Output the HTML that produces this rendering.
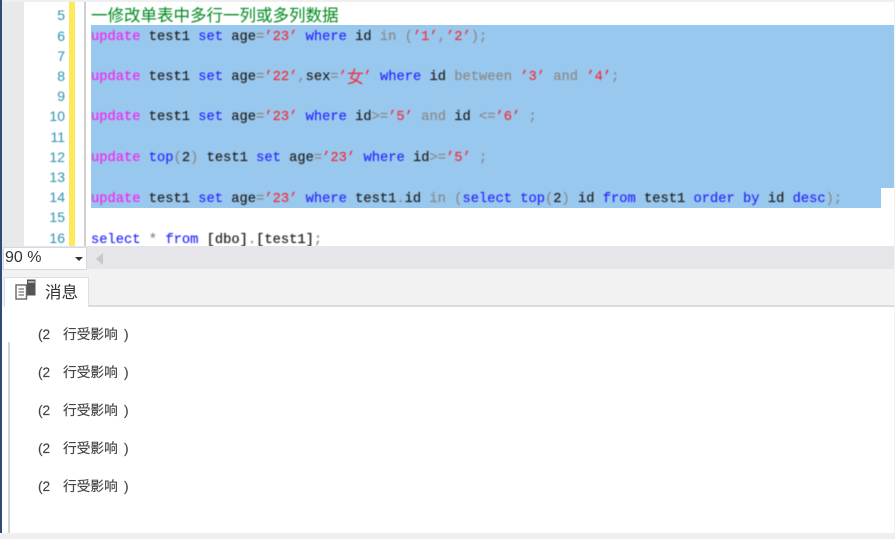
<!DOCTYPE html>
<html><head><meta charset="utf-8"><style>
html,body{margin:0;padding:0;background:#fff}
body{width:895px;height:539px;position:relative;overflow:hidden}
.a{position:absolute}
.l{position:absolute;left:91px;height:20px;line-height:20px;white-space:pre;font-family:"Liberation Mono",monospace;font-size:13.75px;color:#222;font-weight:400;-webkit-text-stroke:.2px;filter:blur(.45px)}
.l i{font-style:normal}
.m{color:#f526f5}.b{color:#2a2aff}.g{color:#8a8a8a}.r{color:#f0303f}
.z{font-family:"Noto Sans CJK SC",sans-serif;font-size:17px;display:inline-block;width:16.5px;height:20px;line-height:20px;overflow:visible;vertical-align:top;text-align:center;-webkit-text-stroke:0;position:relative;top:-2px}
.n{position:absolute;left:30px;width:35px;text-align:right;height:20px;line-height:20px;font-family:"Liberation Sans",sans-serif;font-size:14px;color:#2b91af;filter:blur(.4px)}
.o{position:absolute;height:18px;line-height:18px;white-space:pre;font-family:"Liberation Sans","Noto Sans CJK SC",sans-serif;font-size:13.7px;color:#444;-webkit-text-stroke:.15px;filter:blur(.35px)}
</style></head><body>
<div class="a" style="left:0;top:0;width:895px;height:2px;background:#efefef"></div>
<div class="a" style="left:2px;top:2px;width:22px;height:244px;background:#e9e9ea"></div>
<div class="a" style="left:69px;top:2px;width:6px;height:244px;background:#fde95a"></div>
<div class="a" style="left:84px;top:2px;width:2px;height:244px;background:#cfcfcf"></div>
<div class="a" style="left:91px;top:25px;width:804px;height:163px;background:#99c8ee"></div>
<div class="a" style="left:91px;top:188px;width:790px;height:20px;background:#99c8ee"></div>

<div class="n" style="top:5px">5</div>
<div class="n" style="top:26px">6</div>
<div class="n" style="top:46px">7</div>
<div class="n" style="top:66px">8</div>
<div class="n" style="top:86px">9</div>
<div class="n" style="top:106px">10</div>
<div class="n" style="top:127px">11</div>
<div class="n" style="top:147px">12</div>
<div class="n" style="top:167px">13</div>
<div class="n" style="top:187px">14</div>
<div class="n" style="top:207px">15</div>
<div class="n" style="top:228px">16</div>

<div class="l" style="top:4px;color:#008a20;font-family:'Noto Sans CJK SC',sans-serif;font-size:16.5px;-webkit-text-stroke:0">一修改单表中多行一列或多列数据</div>
<div class="l" style="top:28px"><i class="m">update</i> test1 <i class="b">set</i> age<i class="g">=</i><i class="r">’23’</i> <i class="b">where</i> id <i class="g">in (</i><i class="r">’1’</i><i class="g">,</i><i class="r">’2’</i><i class="g">);</i></div>
<div class="l" style="top:68px"><i class="m">update</i> test1 <i class="b">set</i> age<i class="g">=</i><i class="r">’22’</i><i class="g">,</i>sex<i class="g">=</i><i class="r">’<span class="z">女</span>’</i> <i class="b">where</i> id <i class="g">between</i> <i class="r">’3’</i> <i class="g">and</i> <i class="r">’4’</i><i class="g">;</i></div>
<div class="l" style="top:108px"><i class="m">update</i> test1 <i class="b">set</i> age<i class="g">=</i><i class="r">’23’</i> <i class="b">where</i> id<i class="g">&gt;=</i><i class="r">’5’</i> <i class="g">and</i> id <i class="g">&lt;=</i><i class="r">’6’</i> <i class="g">;</i></div>
<div class="l" style="top:149px"><i class="m">update</i> <i class="b">top</i><i class="g">(</i>2<i class="g">)</i> test1 <i class="b">set</i> age<i class="g">=</i><i class="r">’23’</i> <i class="b">where</i> id<i class="g">&gt;=</i><i class="r">’5’</i> <i class="g">;</i></div>
<div class="l" style="top:190px"><i class="m">update</i> test1 <i class="b">set</i> age<i class="g">=</i><i class="r">’23’</i> <i class="b">where</i> test1<i class="g">.</i>id <i class="g">in (</i><i class="b">select top</i><i class="g">(</i>2<i class="g">)</i> id <i class="b">from</i> test1 <i class="b">order by</i> id <i class="b">desc</i><i class="g">);</i></div>
<div class="l" style="top:231px"><i class="b">select</i> <i class="g">*</i> <i class="b">from</i> [dbo]<i class="g">.</i>[test1]<i class="g">;</i></div>

<div class="a" style="left:2px;top:246px;width:893px;height:23px;background:#e6e6ea"></div>
<div class="a" style="left:2px;top:269px;width:893px;height:37px;background:#f2f2f2"></div>
<div class="a" style="left:3px;top:247px;width:82px;height:21px;background:#fff;border:1px solid #d3d9e8"></div>
<div class="a" style="left:5px;top:249px;font:16px/18px 'Liberation Sans',sans-serif;color:#333;filter:blur(.35px)">90 %</div>
<div class="a" style="left:75px;top:257px;width:0;height:0;border:4px solid transparent;border-top:4px solid #333;border-bottom:0"></div>
<div class="a" style="left:96px;top:253px;width:0;height:0;border:6px solid transparent;border-right:7px solid #c8c8cc;border-left:0"></div>

<div class="a" style="left:4px;top:277px;width:85px;height:30px;background:#fff;border:1px solid #dedede;border-bottom:0;box-sizing:border-box"></div>
<div class="a" style="left:89px;top:305px;width:806px;height:2px;background:#dcdcdc"></div>
<svg class="a" style="left:14px;top:278px" width="23" height="23" viewBox="0 0 23 23">
<rect x="13" y="1.5" width="8.5" height="16" fill="#555"/><rect x="14" y="3" width="6.5" height="2" fill="#aaa"/>
<rect x="2" y="7" width="10.5" height="14" fill="#fff" stroke="#666" stroke-width="1.4"/>
<path d="M4.5 11h5.5M4.5 14h5.5M4.5 17h5.5" stroke="#777" stroke-width="1.2" fill="none"/>
</svg>
<div class="a" style="left:45px;top:281px;font:16.5px/20px 'Noto Sans CJK SC',sans-serif;color:#333;filter:blur(.25px)">消息</div>

<div class="a" style="left:8px;top:342px;width:2px;height:191px;background:#d4d4d8"></div>
<div class="o" style="left:38px;top:326px">(2</div><div class="o" style="left:63px;top:326px">行受影响</div><div class="o" style="left:124px;top:326px">)</div>
<div class="o" style="left:38px;top:364px">(2</div><div class="o" style="left:63px;top:364px">行受影响</div><div class="o" style="left:124px;top:364px">)</div>
<div class="o" style="left:38px;top:402px">(2</div><div class="o" style="left:63px;top:402px">行受影响</div><div class="o" style="left:124px;top:402px">)</div>
<div class="o" style="left:38px;top:440px">(2</div><div class="o" style="left:63px;top:440px">行受影响</div><div class="o" style="left:124px;top:440px">)</div>
<div class="o" style="left:38px;top:478px">(2</div><div class="o" style="left:63px;top:478px">行受影响</div><div class="o" style="left:124px;top:478px">)</div>

<div class="a" style="left:0;top:533px;width:895px;height:6px;background:#efefef"></div>
<div class="a" style="left:0;top:0;width:2px;height:533px;background:#2f4a78"></div>
<div class="a" style="left:894px;top:0;width:1px;height:533px;background:#f2f2f2"></div>
</body></html>
